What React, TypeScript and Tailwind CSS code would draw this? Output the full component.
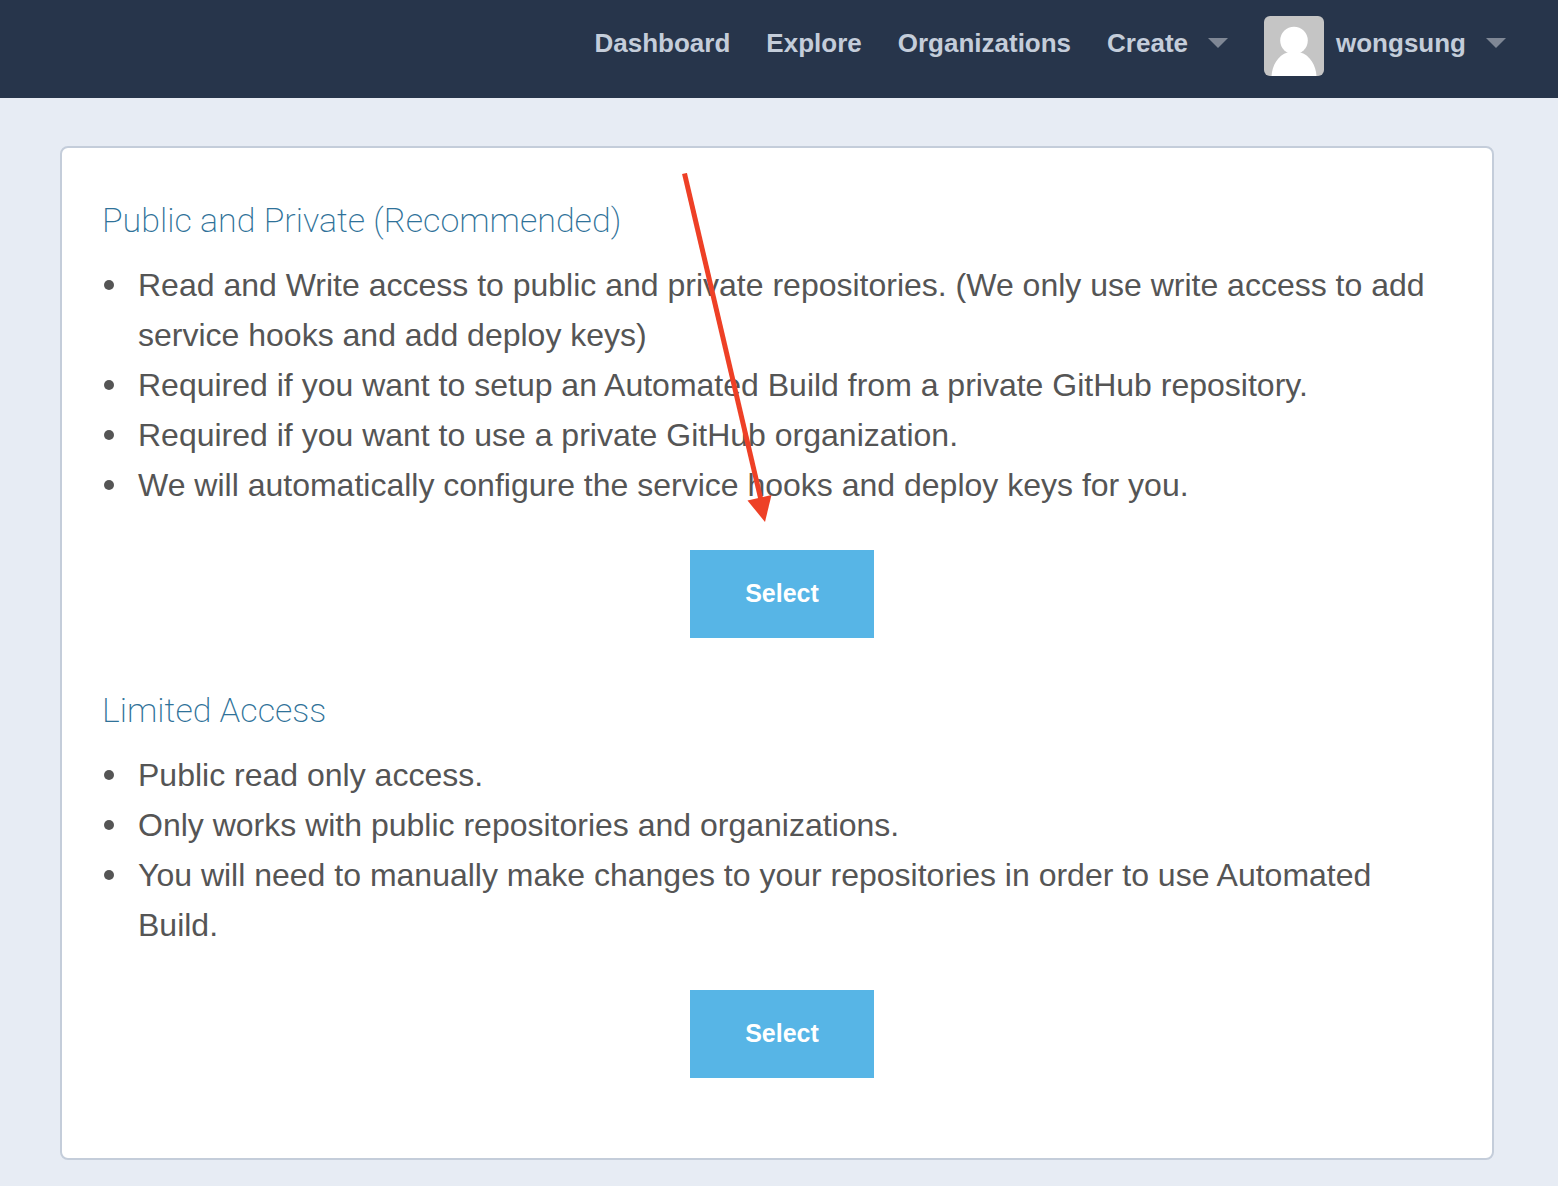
import type { ReactNode } from "react";

function Caret() {
  return (
    <svg viewBox="0 0 20 10" className="h-[10px] w-5 shrink-0" fill="#7f8795" aria-hidden="true">
      <path d="M0 0H20L10 10Z" />
    </svg>
  );
}

function Avatar() {
  return (
    <svg viewBox="0 0 60 60" className="size-15 shrink-0 rounded-md bg-[#c5c5c5]" fill="#ffffff" aria-hidden="true">
      <ellipse cx="30" cy="24.5" rx="13.8" ry="13.8" />
      <path d="M7.500 60C8 50 14 39 23.500 36.500H36.500C46 39 52 50 52.500 60Z" />
    </svg>
  );
}

function Header() {
  return (
    <header className="bg-[#27354b] pt-4 pr-13 pb-[22px] text-[26px] leading-[54px] font-bold text-[#c4cdda]">
      <nav className="flex items-start justify-end gap-9">
        <a href="#dashboard">Dashboard</a>
        <a href="#explore">Explore</a>
        <a href="#organizations">Organizations</a>
        <button type="button" className="flex items-center gap-5">
          Create
          <Caret />
        </button>
        <button type="button" className="flex items-start">
          <Avatar />
          <span className="ml-3 flex items-center gap-5">
            wongsung
            <Caret />
          </span>
        </button>
      </nav>
    </header>
  );
}

function Arrow() {
  return (
    <svg
      viewBox="0 0 90 350"
      className="pointer-events-none absolute right-1/2 bottom-full mr-[10px] mb-[27px] h-[350px] w-[90px]"
      aria-hidden="true"
    >
      <path d="M2.500 0.500L79 327" stroke="#ee4026" strokeWidth="5" />
      <path d="M65.500 327.500L89.500 322L83 349Z" fill="#ee4026" />
    </svg>
  );
}

type AccessProps = { title: string; items: string[]; pointer?: ReactNode };

function AccessOption({ title, items, pointer }: AccessProps) {
  return (
    <section>
      <h2 className="mb-4 font-[Roboto,sans-serif] text-[34px] leading-[48px] font-extralight text-[#2f7299]">{title}</h2>
      <ul className="list-none pr-4 text-[32px] leading-[50px] text-[#555555]">
        {items.map((item) => (
          <li key={item} className="flex items-start gap-6">
            <span className="mt-5 ml-0.5 size-[10px] shrink-0 rounded-full bg-[#555555]" />
            <span>{item}</span>
          </li>
        ))}
      </ul>
      <div className="relative mt-10 flex justify-center">
        {pointer}
        <button
          type="button"
          aria-label={`Select ${title}`}
          className="bg-[#57b5e6] px-[55px] pt-[18px] pb-5 text-[25px] leading-[50px] font-bold text-white"
        >
          Select
        </button>
      </div>
    </section>
  );
}

export default function App() {
  return (
    <div className="min-h-screen bg-[#e7ecf4] font-['Liberation_Sans',Arial,sans-serif]">
      <Header />
      <main className="pt-12 pr-16 pb-[26px] pl-15">
        <div className="flex flex-col gap-12 rounded-lg border-2 border-[#c4cdda] bg-white pt-12 pr-[30px] pb-20 pl-10">
          <AccessOption
            title="Public and Private (Recommended)"
            pointer={<Arrow />}
            items={[
              "Read and Write access to public and private repositories. (We only use write access to add service hooks and add deploy keys)",
              "Required if you want to setup an Automated Build from a private GitHub repository.",
              "Required if you want to use a private GitHub organization.",
              "We will automatically configure the service hooks and deploy keys for you.",
            ]}
          />
          <AccessOption
            title="Limited Access"
            items={[
              "Public read only access.",
              "Only works with public repositories and organizations.",
              "You will need to manually make changes to your repositories in order to use Automated Build.",
            ]}
          />
        </div>
      </main>
    </div>
  );
}
